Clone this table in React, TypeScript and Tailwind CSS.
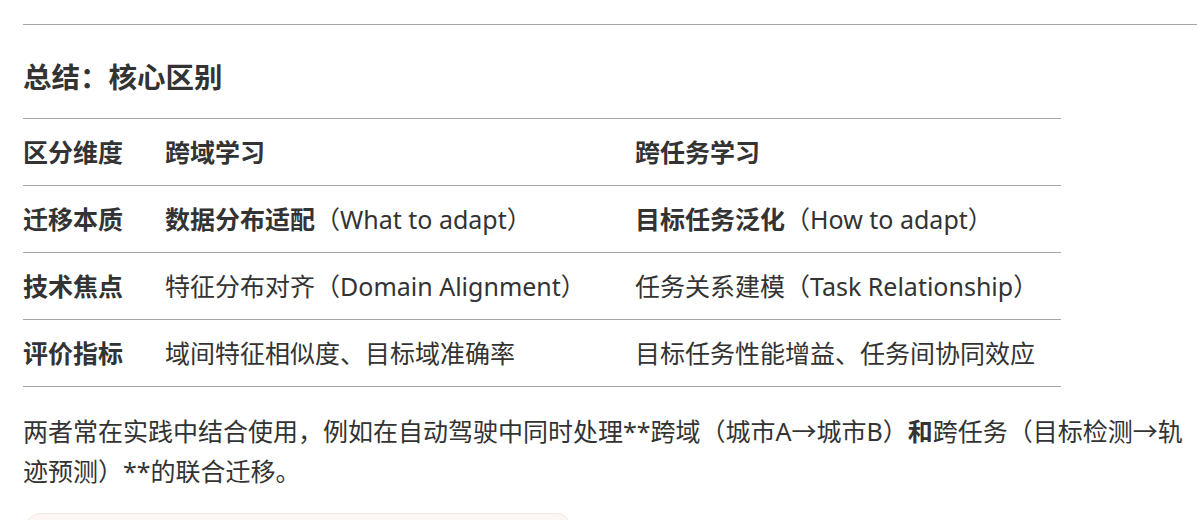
import React from "react";

const font = { fontFamily: '"Noto Sans", "Noto Sans CJK SC", sans-serif' };

type Cell = React.ReactNode;

const rows: Cell[][] = [
  [
    <b key="a">区分维度</b>,
    <b key="b">跨域学习</b>,
    <b key="c">跨任务学习</b>,
  ],
  [
    <b key="a">迁移本质</b>,
    <span key="b">
      <b>数据分布适配</b>（What to adapt）
    </span>,
    <span key="c">
      <b>目标任务泛化</b>（How to adapt）
    </span>,
  ],
  [
    <b key="a">技术焦点</b>,
    <span key="b">特征分布对齐（Domain Alignment）</span>,
    <span key="c">任务关系建模（Task Relationship）</span>,
  ],
  [
    <b key="a">评价指标</b>,
    <span key="b">域间特征相似度、目标域准确率</span>,
    <span key="c">目标任务性能增益、任务间协同效应</span>,
  ],
];

export default function App() {
  return (
    <div
      className="w-[1199px] h-[520px] overflow-hidden bg-white pl-[23px] pt-[24px] text-[#333333]"
      style={font}
    >
      <div className="border-t border-[#a6a6a6] mr-[2px]" />
      <h2 className="mt-[31px] text-[28.5px] leading-[42px] font-bold">总结：核心区别</h2>
      <div className="mt-[20px] w-[1038px] border-b border-[#a6a6a6] text-[25px]">
        {rows.map((r, i) => (
          <div
            key={i}
            className="grid grid-cols-[142px_470px_426px] h-[67px] items-center border-t border-[#a6a6a6]"
          >
            {r.map((c, j) => (
              <div key={j} className="leading-[30px] whitespace-nowrap">
                {c}
              </div>
            ))}
          </div>
        ))}
      </div>
      <p className="mt-[24px] w-[1168px] text-[25px] leading-[40px]">
        两者常在实践中结合使用，例如在自动驾驶中同时处理**跨域（城市A→城市B）<b>和</b>跨任务（目标检测→轨迹预测）**的联合迁移。
      </p>
      <div className="mt-[22px] ml-[3px] w-[545px] h-[60px] rounded-[14px] border border-[#f9e6df] bg-[#fdf6f4]" />
    </div>
  );
}
